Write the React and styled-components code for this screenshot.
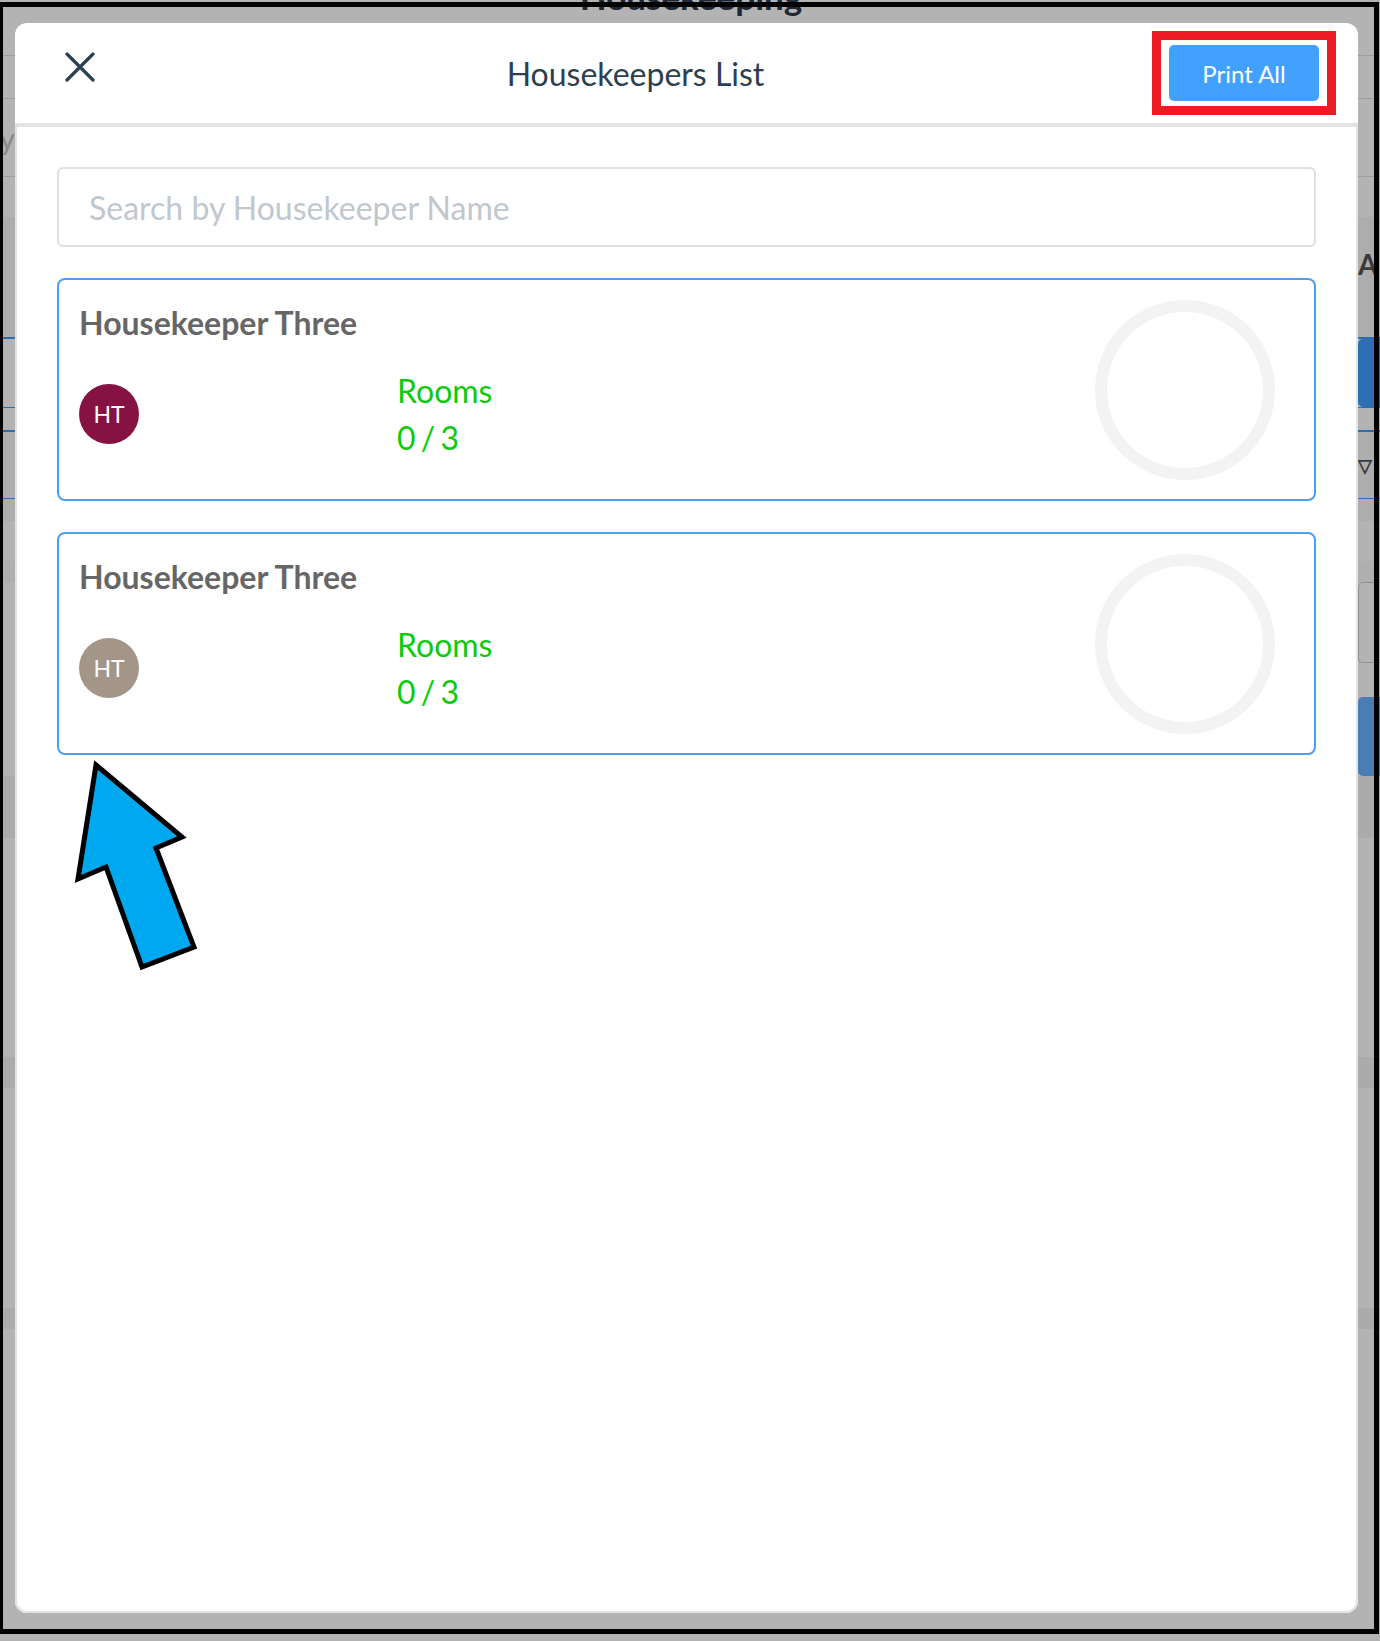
import styled, { createGlobalStyle } from "styled-components";

const GlobalStyle = createGlobalStyle`
  html, body {
    margin: 0;
    padding: 0;
  }
  body {
    font-family: Lato, "Open Sans", "Liberation Sans", sans-serif;
  }
`;

const housekeepers = [
  { id: 1, name: "Housekeeper Three", initials: "HT", color: "#861244", done: 0, total: 3 },
  { id: 2, name: "Housekeeper Three", initials: "HT", color: "#a39588", done: 0, total: 3 },
];

const CloseIcon = () => (
  <svg width="30" height="30" viewBox="0 0 30 30">
    <path
      d="M2 2 L28 28 M28 2 L2 28"
      stroke="#2c3e50"
      strokeWidth="3.2"
      strokeLinecap="round"
      fill="none"
    />
  </svg>
);

const Ring = () => (
  <RingBox>
    <svg width="180" height="180" viewBox="0 0 180 180">
      <circle cx="90" cy="90" r="84" stroke="#f3f3f3" strokeWidth="12" fill="none" />
    </svg>
  </RingBox>
);

const HousekeeperCard = ({ item }) => (
  <Card>
    <Info>
      <Name>{item.name}</Name>
      <Row>
        <AvatarCell>
          <Avatar $bg={item.color}>{item.initials}</Avatar>
        </AvatarCell>
        <Rooms>
          <div>Rooms</div>
          <Count>
            {item.done} / {item.total}
          </Count>
        </Rooms>
      </Row>
    </Info>
    <Ring />
  </Card>
);

const App = () => {
  return (
    <>
      <GlobalStyle />
      <Screen>
        {/* dimmed page behind the modal */}
        <BgPage>
          <BgHeader>
            <BgTitle>Housekeeping</BgTitle>
          </BgHeader>
          <BgRow $h={43} $line="#9d9d9d" />
          <BgRow $h={78} $line="#9d9d9d">
            <BgLabel>Today</BgLabel>
          </BgRow>
          <BgRow $h={40} />
          <BgRow $h={120} $bg="#adadad" $align="flex-start">
            <BgEdge>
              <BgLetter $top={30}>A</BgLetter>
            </BgEdge>
          </BgRow>
          <BgRow $h={71} $top="#2d6db0" $line="#2d6db0">
            <BgEdge>
              <BgBlock $bg="#2e6fb3" />
            </BgEdge>
          </BgRow>
          <BgRow $h={22} />
          <BgRow $h={69} $bg="#adadad" $top="#2d6db0" $line="#2d6db0">
            <BgEdge>
              <BgLetter $small>▽</BgLetter>
            </BgEdge>
          </BgRow>
          <BgRow $h={22} $bg="#adadad" />
          <BgRow $h={40} />
          <BgRow $h={21} $bg="#afafaf" />
          <BgRow $h={81}>
            <BgEdge>
              <BgOutline />
            </BgEdge>
          </BgRow>
          <BgRow $h={34} />
          <BgRow $h={79}>
            <BgEdge>
              <BgBlock $bg="#4a7db3" />
            </BgEdge>
          </BgRow>
          <BgRow $h={62} $bg="#ababab" />
          <BgRow $h={219} />
          <BgRow $h={31} $bg="#ababab" />
          <BgRow $h={220} />
          <BgRow $h={21} $bg="#ababab" />
        </BgPage>

        <Modal>
          <Header>
            <CloseButton aria-label="Close">
              <CloseIcon />
            </CloseButton>
            <Title>Housekeepers List</Title>
            <Highlight>
              <PrintButton>Print All</PrintButton>
            </Highlight>
          </Header>
          <Body>
            <Search placeholder="Search by Housekeeper Name" />
            {housekeepers.map((h) => (
              <HousekeeperCard key={h.id} item={h} />
            ))}
          </Body>
        </Modal>

        <Arrow>
          <svg width="160" height="240" viewBox="0 0 160 240">
            <polygon
              points="37,21 123,93 97,104 135,203 83,223 47,123 19,135"
              fill="#00a8f0"
              stroke="#000"
              strokeWidth="5"
              strokeLinejoin="miter"
            />
          </svg>
        </Arrow>

        <Frame />
      </Screen>
    </>
  );
};

const Screen = styled.div`
  position: relative;
  width: 1380px;
  height: 1641px;
  background: #b3b3b3;
  overflow: hidden;
`;

const BgPage = styled.div`
  display: flex;
  flex-direction: column;
`;

const BgHeader = styled.div`
  height: 56px;
  box-sizing: border-box;
  display: flex;
  justify-content: center;
  align-items: flex-start;
  border-bottom: 1px solid #9d9d9d;
`;

const BgTitle = styled.div`
  margin-top: -25px;
  margin-left: 2px;
  font-size: 35px;
  line-height: 42px;
  font-weight: 700;
  color: #1d2735;
`;

const BgRow = styled.div`
  height: ${(p) => p.$h}px;
  box-sizing: border-box;
  display: flex;
  align-items: ${(p) => p.$align || "center"};
  background: ${(p) => p.$bg || "transparent"};
  border-top: ${(p) => (p.$top ? `2px solid ${p.$top}` : "none")};
  border-bottom: ${(p) => (p.$line ? `1px solid ${p.$line}` : "none")};
`;

const BgLabel = styled.div`
  width: 15px;
  display: flex;
  justify-content: flex-end;
  overflow: hidden;
  white-space: nowrap;
  font-size: 30px;
  color: #8a8a8a;
`;

const BgEdge = styled.div`
  margin-left: auto;
  width: 22px;
  height: 100%;
  display: flex;
  align-items: ${(p) => p.$align || "center"};
`;

const BgLetter = styled.span`
  align-self: ${(p) => (p.$top ? "flex-start" : "center")};
  margin-top: ${(p) => p.$top || 0}px;
  font-size: ${(p) => (p.$small ? "18px" : "28px")};
  font-weight: 700;
  color: #3a3a3a;
`;

const BgBlock = styled.div`
  width: 100%;
  height: 100%;
  background: ${(p) => p.$bg};
  border-radius: 5px 0 0 5px;
`;

const BgOutline = styled.div`
  width: 100%;
  height: 100%;
  box-sizing: border-box;
  border: 1px solid #8e8e8e;
  border-right: none;
  border-radius: 5px 0 0 5px;
`;

const Modal = styled.div`
  position: absolute;
  left: 15px;
  top: 23px;
  width: 1343px;
  height: 1590px;
  background: #fff;
  border-radius: 12px;
  display: flex;
  flex-direction: column;
  overflow: hidden;
`;

const Header = styled.div`
  height: 100px;
  flex-shrink: 0;
  display: flex;
  align-items: center;
  justify-content: space-between;
  padding: 0 22px 0 50px;
  border-bottom: 4px solid #e3e3e3;
`;

const CloseButton = styled.button`
  width: 54px;
  height: 40px;
  margin-bottom: 12px;
  padding: 0;
  border: none;
  background: none;
  display: flex;
  align-items: center;
  cursor: pointer;
`;

const Title = styled.h1`
  margin: 0;
  font-size: 32px;
  font-weight: 400;
  color: #2c3e50;
`;

const Highlight = styled.div`
  display: flex;
  padding: 5px 8px;
  border: 9px solid #ed1c24;
`;

const PrintButton = styled.button`
  width: 150px;
  height: 56px;
  border: none;
  border-radius: 5px;
  background: #42a0ff;
  color: #fff;
  font-family: Lato, "Open Sans", sans-serif;
  font-size: 24px;
  cursor: pointer;
`;

const Body = styled.div`
  flex: 1;
  display: flex;
  flex-direction: column;
  gap: 31px;
  padding: 40px;
  border: 2px solid #e3e3e3;
  border-top: none;
  border-radius: 0 0 12px 12px;
`;

const Search = styled.input`
  height: 80px;
  box-sizing: border-box;
  padding: 0 30px;
  border: 2px solid #dcdfe4;
  border-radius: 6px;
  font-family: Lato, "Open Sans", sans-serif;
  font-size: 32px;
  color: #333;
  outline: none;

  &::placeholder {
    color: #c1c7cf;
  }
`;

const Card = styled.div`
  display: flex;
  align-items: center;
  padding: 0 39px 0 20px;
  border: 2px solid #4a9ff5;
  border-radius: 8px;
`;

const Info = styled.div`
  flex: 1;
  padding: 25px 0 38px;
`;

const Name = styled.div`
  margin-bottom: 26px;
  font-size: 32px;
  line-height: 36px;
  font-weight: 700;
  color: #666;
`;

const Row = styled.div`
  display: flex;
  align-items: center;
`;

const AvatarCell = styled.div`
  width: 318px;
`;

const Avatar = styled.div`
  width: 60px;
  height: 60px;
  border-radius: 50%;
  background: ${(p) => p.$bg};
  color: #fff;
  font-size: 23px;
  display: flex;
  align-items: center;
  justify-content: center;
`;

const Rooms = styled.div`
  font-size: 32px;
  line-height: 47px;
  color: #0ccb0c;
`;

const Count = styled.div`
  word-spacing: -3px;
`;

const RingBox = styled.div`
  display: flex;
  width: 180px;
  height: 180px;
`;

const Arrow = styled.div`
  position: absolute;
  left: 59px;
  top: 744px;
  line-height: 0;
`;

const Frame = styled.div`
  position: absolute;
  left: 0;
  top: 2px;
  width: 1379px;
  height: 1632px;
  box-sizing: border-box;
  border: 5px solid #000;
  border-left-width: 3px;
  pointer-events: none;
`;

export default App;
